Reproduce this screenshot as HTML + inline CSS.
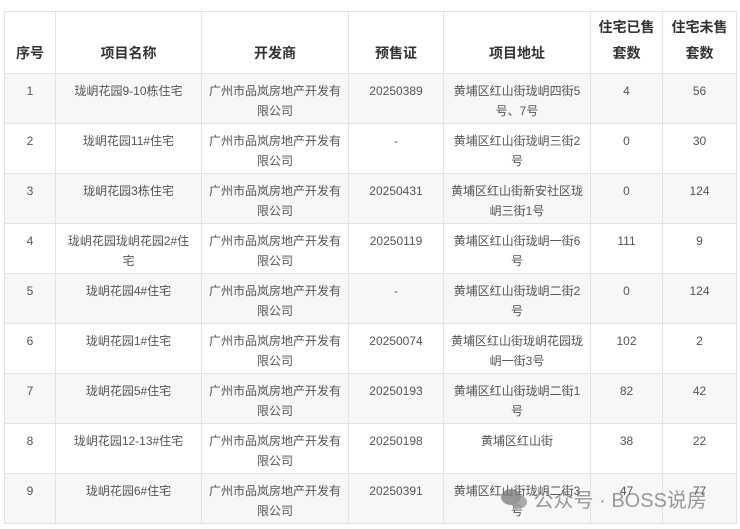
<!DOCTYPE html>
<html><head><meta charset="utf-8"><style>
html,body{margin:0;padding:0;background:#fff;width:740px;height:529px;overflow:hidden}
table{position:absolute;left:4px;top:11px;border-collapse:collapse;table-layout:fixed;font-family:"Liberation Sans","Noto Sans CJK SC",sans-serif;font-size:12px;color:#555}
td,th{border:1px solid #e3e3e3;text-align:center;padding:0 6px;line-height:20px}
th{height:62px;vertical-align:bottom;padding-bottom:7px;font-size:14px;color:#333;font-weight:bold;line-height:26px;box-sizing:border-box}
td{height:50px;vertical-align:top;padding-top:7px;box-sizing:border-box}
tr.g td{background:#f7f7f7}
.wm{position:absolute;left:500px;top:484px;font-family:"Liberation Sans","Noto Sans CJK SC",sans-serif;font-size:20px;color:rgba(120,120,120,.75);white-space:nowrap}
</style></head><body>
<table>
<colgroup><col style="width:51px"><col style="width:146px"><col style="width:147px"><col style="width:95px"><col style="width:147px"><col style="width:72px"><col style="width:74px"></colgroup>
<tr><th>序号</th><th>项目名称</th><th>开发商</th><th>预售证</th><th>项目地址</th><th>住宅已售<br>套数</th><th>住宅未售<br>套数</th></tr>
<tr class="g"><td>1</td><td>珑岄花园9-10栋住宅</td><td>广州市品岚房地产开发有限公司</td><td>20250389</td><td>黄埔区红山街珑岄四街5号、7号</td><td>4</td><td>56</td></tr>
<tr><td>2</td><td>珑岄花园11#住宅</td><td>广州市品岚房地产开发有限公司</td><td>-</td><td>黄埔区红山街珑岄三街2号</td><td>0</td><td>30</td></tr>
<tr class="g"><td>3</td><td>珑岄花园3栋住宅</td><td>广州市品岚房地产开发有限公司</td><td>20250431</td><td>黄埔区红山街新安社区珑岄三街1号</td><td>0</td><td>124</td></tr>
<tr><td>4</td><td>珑岄花园珑岄花园2#住宅</td><td>广州市品岚房地产开发有限公司</td><td>20250119</td><td>黄埔区红山街珑岄一街6号</td><td>111</td><td>9</td></tr>
<tr class="g"><td>5</td><td>珑岄花园4#住宅</td><td>广州市品岚房地产开发有限公司</td><td>-</td><td>黄埔区红山街珑岄二街2号</td><td>0</td><td>124</td></tr>
<tr><td>6</td><td>珑岄花园1#住宅</td><td>广州市品岚房地产开发有限公司</td><td>20250074</td><td>黄埔区红山街珑岄花园珑岄一街3号</td><td>102</td><td>2</td></tr>
<tr class="g"><td>7</td><td>珑岄花园5#住宅</td><td>广州市品岚房地产开发有限公司</td><td>20250193</td><td>黄埔区红山街珑岄二街1号</td><td>82</td><td>42</td></tr>
<tr><td>8</td><td>珑岄花园12-13#住宅</td><td>广州市品岚房地产开发有限公司</td><td>20250198</td><td>黄埔区红山街</td><td>38</td><td>22</td></tr>
<tr class="g"><td>9</td><td>珑岄花园6#住宅</td><td>广州市品岚房地产开发有限公司</td><td>20250391</td><td>黄埔区红山街珑岄二街3号</td><td>47</td><td>77</td></tr>
</table>
<div class="wm"><svg width="28" height="22" viewBox="0 0 28 22" style="vertical-align:-3px"><ellipse cx="11" cy="9" rx="10" ry="8" fill="rgba(120,120,120,.75)"/><ellipse cx="19" cy="14" rx="8" ry="6.5" fill="rgba(150,150,150,.8)"/></svg> 公众号 · BOSS说房</div>
</body></html>
